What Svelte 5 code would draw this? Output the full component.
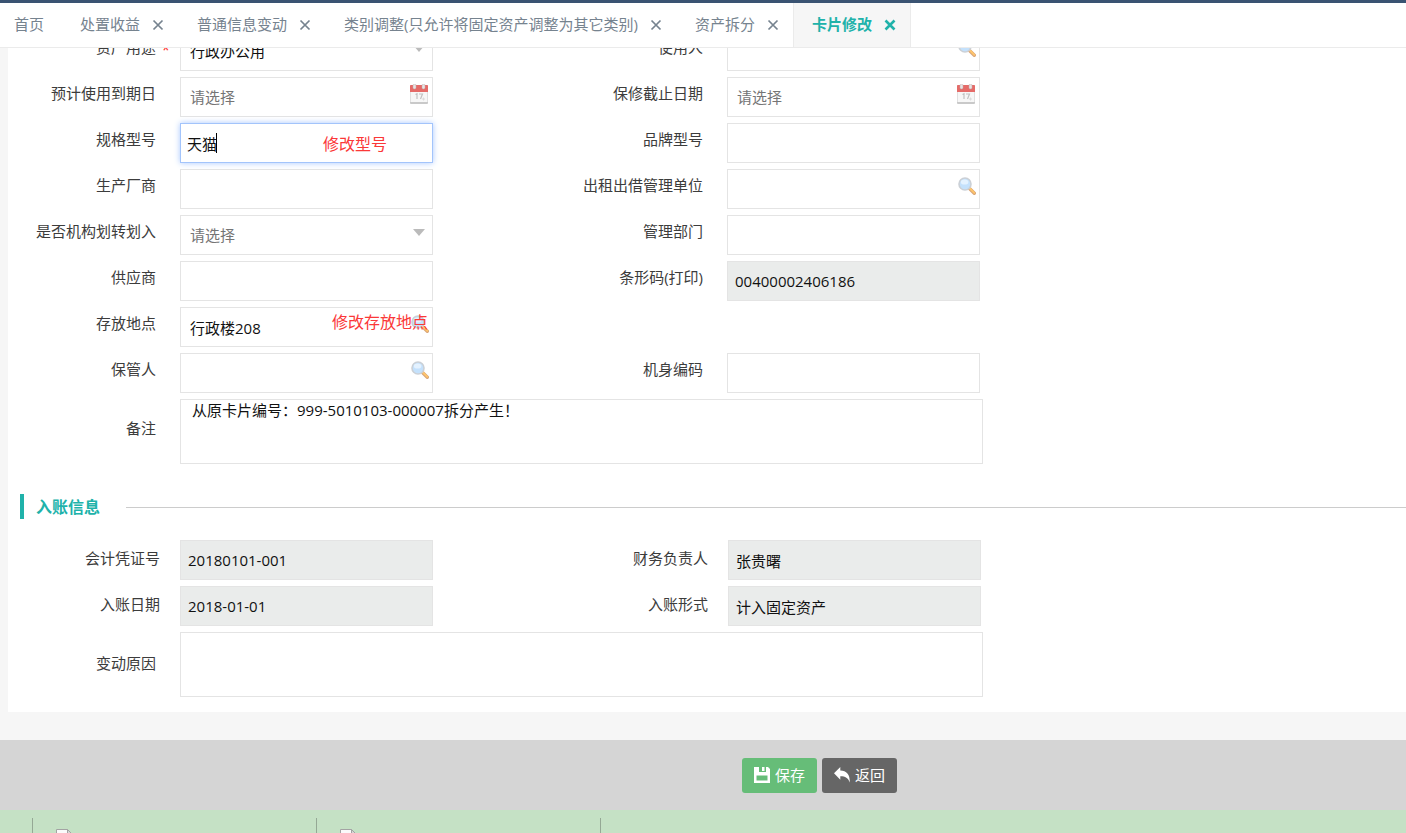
<script>
    let tabs = $state([
        { title: "首页", fixed: true },
        { title: "处置收益" },
        { title: "普通信息变动" },
        { title: "类别调整(只允许将固定资产调整为其它类别)" },
        { title: "资产拆分" },
        { title: "卡片修改" },
    ]);
    let active = $state("卡片修改");

    let cardFields = $state([
        { id: "usage", label: "资产用途", type: "select", value: "行政办公用", required: true },
        { id: "user", label: "使用人", type: "search", value: "" },
        { id: "expire", label: "预计使用到期日", type: "date", value: "" },
        { id: "warranty", label: "保修截止日期", type: "date", value: "" },
        { id: "spec", label: "规格型号", type: "text", value: "天猫", editing: true, note: "修改型号" },
        { id: "brand", label: "品牌型号", type: "text", value: "" },
        { id: "maker", label: "生产厂商", type: "text", value: "" },
        { id: "lease", label: "出租出借管理单位", type: "search", value: "" },
        { id: "transfer", label: "是否机构划转划入", type: "select", value: "" },
        { id: "dept", label: "管理部门", type: "text", value: "" },
        { id: "supplier", label: "供应商", type: "text", value: "" },
        { id: "barcode", label: "条形码(打印)", type: "text", value: "00400002406186", readonly: true },
        { id: "place", label: "存放地点", type: "search", value: "行政楼208", note: "修改存放地点" },
        { type: "empty" },
        { id: "keeper", label: "保管人", type: "search", value: "" },
        { id: "serial", label: "机身编码", type: "text", value: "" },
        { id: "remark", label: "备注", type: "area", value: "从原卡片编号：999-5010103-000007拆分产生！" },
    ]);

    let accountFields = $state([
        { id: "voucher", label: "会计凭证号", type: "text", value: "20180101-001", readonly: true },
        { id: "leader", label: "财务负责人", type: "text", value: "张贵曙", readonly: true },
        { id: "postDate", label: "入账日期", type: "text", value: "2018-01-01", readonly: true },
        { id: "postType", label: "入账形式", type: "text", value: "计入固定资产", readonly: true },
        { id: "reason", label: "变动原因", type: "area", value: "" },
    ]);

    function closeTab(title) {
        tabs = tabs.filter((t) => t.title !== title);
    }
</script>

{#snippet searchIcon()}
    <svg class="icon" viewBox="0 0 18 18" aria-hidden="true">
        <path d="M11.5 11.5 16.3 16.3" stroke="#d9a679" stroke-width="3.4" stroke-linecap="round" />
        <path d="M12 11.5 16.3 15.8" stroke="#ffc56b" stroke-width="1.8" stroke-linecap="round" />
        <circle cx="7" cy="7" r="6" fill="#c4e1fc" stroke="#cbd0d6" stroke-width="1.6" />
        <ellipse cx="6.6" cy="5" rx="3.8" ry="2.6" fill="#e4f2ff" />
    </svg>
{/snippet}

{#snippet calendarIcon()}
    <svg class="icon calendar" viewBox="0 0 18 20" aria-hidden="true">
        <rect x="0" y="1" width="18" height="19" rx="1" fill="#c9c9c9" />
        <rect x="0.5" y="7" width="17" height="11" fill="#f7f7f7" />
        <path d="M0 2a1 1 0 0 1 1-1h16a1 1 0 0 1 1 1v6H0z" fill="#e56b68" />
        <rect x="3" y="0" width="3" height="5" rx="1.5" fill="#e8e4e4" stroke="#bdaeae" stroke-width="0.5" />
        <rect x="12" y="0" width="3" height="5" rx="1.5" fill="#e8e4e4" stroke="#bdaeae" stroke-width="0.5" />
        <path d="M5.5 10.5 7 9.8V15M9 10h3.5L10.5 15" fill="none" stroke="#c2c2c2" stroke-width="1.2" />
        <path d="M12 15h3M13.5 13.5v3" stroke="#dcdcdc" stroke-width="1" />
    </svg>
{/snippet}

{#snippet formField(f)}
    {#if f.type === "empty"}
        <span></span><span></span>
    {:else}
        <label for={f.id} class:wide-label={f.type === "area"}>
            {f.label}{#if f.required}<span class="star">*</span>{/if}
        </label>
        <div class="field" class:wide={f.type === "area"}>
            {#if f.type === "area"}
                <textarea id={f.id} bind:value={f.value}></textarea>
            {:else if f.type === "select"}
                <select id={f.id} class:placeholder={!f.value} bind:value={f.value}>
                    <option value="">请选择</option>
                    <option value="行政办公用">行政办公用</option>
                </select>
                <svg class="icon arrow" viewBox="0 0 12 7" aria-hidden="true"><path d="M0 0h12L6 7z" fill="#bbb" /></svg>
            {:else if f.type === "date"}
                <input id={f.id} class="picker" type="text" placeholder="请选择" bind:value={f.value} />
                {@render calendarIcon()}
            {:else if f.type === "search"}
                <input id={f.id} class="picker" type="text" bind:value={f.value} />
                {@render searchIcon()}
            {:else}
                <input id={f.id} type="text" readonly={f.readonly} class:editing={f.editing} bind:value={f.value} />
            {/if}
            {#if f.editing}<span class="caret"></span>{/if}
            {#if f.note}
                <span class="note {f.type}">{f.note}</span>
            {/if}
        </div>
    {/if}
{/snippet}

<nav class="tabs">
    {#each tabs as tab (tab.title)}
        <div class="tab" class:active={active === tab.title} class:home={tab.fixed}>
            <button class="tab-title" onclick={() => (active = tab.title)}>{tab.title}</button>
            {#if !tab.fixed}
                <button class="tab-close" aria-label="关闭" onclick={() => closeTab(tab.title)}>
                    <svg viewBox="0 0 12 12"><path d="M1.5 1.5l9 9M10.5 1.5l-9 9" fill="none" stroke="currentColor" /></svg>
                </button>
            {/if}
        </div>
    {/each}
</nav>

<main>
    <form class="panel" onsubmit={(e) => e.preventDefault()}>
        <div class="grid">
            {#each cardFields as f}
                {@render formField(f)}
            {/each}
        </div>
        <div class="section">
            <h2>入账信息</h2>
            <hr />
        </div>
        <div class="grid account">
            {#each accountFields as f}
                {@render formField(f)}
            {/each}
        </div>
    </form>
</main>

<div class="actions">
    <button class="btn save">
        <svg viewBox="0 0 16 16"><path fill="#fff" fill-rule="evenodd" d="M0 0h5v5h7V0h2l2 2v14H0zM2.5 8.5v5h11v-5z" /><path fill="#fff" d="M8 0h2.5v4H8z" /></svg>
        保存
    </button>
    <button class="btn back">
        <svg viewBox="0 0 16 16"><path fill="#fff" d="M0 6.3 6.3 0v3.5C12.5 3.7 16 7 15.8 15.5 14 11 11.5 9.3 6.3 9.3v3.4z" /></svg>
        返回
    </button>
</div>

<footer>
    {#each [0, 1, 2] as n}
        <div class="slot">
            {#if n < 2}
                <svg viewBox="0 0 16 16"><path d="M.5 16V.5h11l4 4V16" fill="#fafafa" stroke="#a3a3a3" /><path d="M11.5.5v4h4z" fill="#d6d6d6" stroke="#a3a3a3" /></svg>
            {/if}
        </div>
    {/each}
</footer>

<style>
    :global(body) {
        background: #f6f6f6;
        font-family: "Open Sans", "Noto Sans CJK SC", sans-serif;
        font-size: 15px;
        color: #3c3c3c;
    }

    button,
    input,
    select,
    textarea {
        font: inherit;
        color: inherit;
        box-sizing: border-box;
        margin: 0;
    }

    button {
        border: none;
        background: none;
        padding: 0;
        cursor: pointer;
    }

    /* Tabs */
    .tabs {
        position: relative;
        z-index: 1;
        display: flex;
        height: 44px;
        border-top: 3px solid #3a5372;
        border-bottom: 1px solid #ebebeb;
        background: #fff;
        color: #76838f;
    }

    .tab {
        display: flex;
        align-items: center;
        gap: 12px;
        padding: 0 14px 0 18px;
        border-left: 1px solid transparent;
        white-space: nowrap;
    }

    .tab.home {
        padding: 0 17px 0 13px;
    }

    .tab.active {
        background: #f6f6f6;
        border-left-color: #ebebeb;
        border-right: 1px solid #ebebeb;
        color: #20b2aa;
        font-weight: 700;
    }

    .tab-title {
        padding-bottom: 2px;
        line-height: 42px;
    }

    .tab-close {
        display: flex;
        width: 12px;
        height: 12px;
    }

    .tab-close svg {
        width: 12px;
        height: 12px;
        stroke-width: 1.7;
    }

    .active .tab-close svg {
        stroke-width: 2.6;
    }

    /* Form */
    main {
        padding: 0 0 28px 8px;
    }

    .panel {
        margin-top: -17px;
        padding-bottom: 15px;
        background: #fff;
    }

    .grid {
        display: grid;
        grid-template-columns: 148px minmax(120px, 253px) minmax(130px, 246px) minmax(120px, 256px);
        column-gap: 24px;
        row-gap: 6px;
        align-items: center;
    }

    .grid.account {
        grid-template-columns: 152px minmax(120px, 253px) minmax(130px, 255px) minmax(120px, 255px);
        column-gap: 20px;
    }

    label {
        position: relative;
        padding-bottom: 8px;
        line-height: 24px;
        text-align: right;
    }

    .account label {
        padding-bottom: 4px;
    }

    .account .wide-label {
        padding-right: 4px;
    }

    .star {
        position: absolute;
        right: -14px;
        top: 2px;
        color: #f33;
    }

    .field {
        position: relative;
        max-width: 253px;
        height: 40px;
    }

    .field.wide {
        grid-column: 2 / -1;
        max-width: none;
        height: 65px;
    }

    input,
    select,
    textarea {
        display: block;
        width: 100%;
        height: 100%;
        padding: 0 7px;
        border: 1px solid #e4e4e4;
        border-radius: 0;
        outline: none;
        background: #fff;
        color: #111;
    }

    select {
        appearance: none;
        padding: 0 9px;
    }

    input.picker {
        padding: 0 30px 0 9px;
    }

    input::placeholder,
    select.placeholder {
        color: #757575;
        opacity: 1;
    }

    input[readonly] {
        background: #eaeceb;
    }

    input.editing {
        padding: 0 6px;
        border-color: #a3c4fb;
        box-shadow: 0 0 6px #a9c8ff;
    }

    textarea {
        padding: 0 11px;
        line-height: 20px;
        resize: none;
    }

    .caret {
        position: absolute;
        left: 36px;
        top: 10px;
        width: 1px;
        height: 20px;
        background: #000;
    }

    .icon {
        position: absolute;
        right: 4px;
        top: 8px;
        width: 18px;
        height: 18px;
        pointer-events: none;
    }

    .icon.calendar {
        right: 5px;
        top: 7px;
        height: 20px;
    }

    .icon.arrow {
        right: 8px;
        top: 14px;
        width: 12px;
        height: 7px;
    }

    .note {
        position: absolute;
        right: 46px;
        top: 9px;
        font-size: 16px;
        line-height: 24px;
        color: #fb3838;
        pointer-events: none;
    }

    .note.search {
        right: 5px;
        top: 3px;
    }

    .section {
        display: flex;
        align-items: center;
        gap: 26px;
        margin: 30px 0 21px 12px;
    }

    h2 {
        margin: 0;
        padding: 2px 0 0 12px;
        border-left: 4px solid #20b2aa;
        font-size: 16px;
        line-height: 23px;
        color: #20b2aa;
    }

    hr {
        flex: 1;
        margin: 2px 0 0;
        border: none;
        border-top: 1px solid #ccc;
    }

    /* Bottom bar */
    .actions {
        display: flex;
        justify-content: center;
        gap: 5px;
        padding: 18px 0 17px 233px;
        background: #d5d5d5;
    }

    .btn {
        display: flex;
        align-items: center;
        gap: 5px;
        height: 35px;
        padding: 0 12px 2px;
        border-radius: 3px;
        color: #fff;
    }

    .btn svg {
        width: 16px;
        height: 16px;
    }

    .save {
        background: #66bd78;
    }

    .back {
        background: #666;
    }

    footer {
        display: flex;
        height: 15px;
        padding: 8px 0 0 32px;
        overflow: hidden;
        background: #c5e1c5;
    }

    .slot {
        flex: 0 0 283px;
        border-left: 1px solid #95a895;
    }

    .slot svg {
        display: block;
        width: 16px;
        height: 16px;
        margin: 11px 0 0 23px;
    }
</style>
